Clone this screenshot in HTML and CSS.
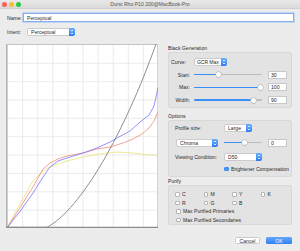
FILE: index.html
```html
<!DOCTYPE html>
<html>
<head>
<meta charset="utf-8">
<link rel="stylesheet" href="styles.css">
</head>
<body>
<div class="window">
  <div class="titlebar">
    <div class="lights"><span class="light red"></span><span class="light yellow"></span><span class="light green"></span></div>
    <div class="title">Durst Rho P10 200@MacBook-Pro</div>
    <div></div>
  </div>
  <div class="content">
    <div class="row name-row"><span class="lbl name-lbl">Name:</span><div class="textfield focus">Perceptual</div></div>
    <div class="row intent-row"><span class="lbl intent-lbl">Intent:</span>
      <div class="popup intent-pop"><span class="ptext">Perceptual</span><span class="stepper"><svg viewBox="0 0 6 8"><polyline points="1.8,3.2 3,2 4.2,3.2"/><polyline points="1.8,4.8 3,6 4.2,4.8"/></svg></span></div>
    </div>
    <div class="main">
      <svg class="graph" viewBox="0 0 152 184" width="152" height="184">
        <rect x="0" y="0" width="152" height="184" fill="#fff"/>
        <g stroke="#e6e6e6" stroke-width="0.8">
          <line x1="16.6" y1="0" x2="16.6" y2="184"/>
          <line x1="31.7" y1="0" x2="31.7" y2="184"/>
          <line x1="46.8" y1="0" x2="46.8" y2="184"/>
          <line x1="61.9" y1="0" x2="61.9" y2="184"/>
          <line x1="77" y1="0" x2="77" y2="184"/>
          <line x1="92.1" y1="0" x2="92.1" y2="184"/>
          <line x1="107.2" y1="0" x2="107.2" y2="184"/>
          <line x1="122.3" y1="0" x2="122.3" y2="184"/>
          <line x1="137.4" y1="0" x2="137.4" y2="184"/>
          <line x1="0" y1="19.3" x2="152" y2="19.3"/>
          <line x1="0" y1="37.7" x2="152" y2="37.7"/>
          <line x1="0" y1="56" x2="152" y2="56"/>
          <line x1="0" y1="74.3" x2="152" y2="74.3"/>
          <line x1="0" y1="92.7" x2="152" y2="92.7"/>
          <line x1="0" y1="111" x2="152" y2="111"/>
          <line x1="0" y1="129.4" x2="152" y2="129.4"/>
          <line x1="0" y1="147.8" x2="152" y2="147.8"/>
          <line x1="0" y1="166.2" x2="152" y2="166.2"/>
        </g>
        <rect x="0" y="0" width="1.6" height="184" fill="#b2b2b2"/>
        <line x1="0" y1="0.5" x2="152" y2="0.5" stroke="#c4c4c4" stroke-width="1"/>
        <line x1="151.5" y1="0" x2="151.5" y2="184" stroke="#d2d2d2" stroke-width="1"/>
        <g fill="none" stroke-width="0.75" stroke-linejoin="round" stroke-linecap="round">
          <polyline stroke="#e8df70" points="1,184 15,158 27,137 37,127 44,123 52,120 61,117 77,113 94,110 111,108 127,109 143,111 152,111"/>
          <polyline stroke="#f08474" points="1,184 15,162 27,143 37,125 44,119 52,115 61,112 77,109 91,105 104,103 117,99 127,95 136,90 143,84 148,77 152,68"/>
          <polyline stroke="#6f6cff" points="1,184 15,166 27,149 37,133 44,123 52,117 61,114 77,109 91,104 104,98 111,94 124,87 134,78 143,71 148,62 152,44"/>
          <path stroke="#6a6a6a" d="M1,183.3 L41,183.3 C75,165 118,90 150,0"/>
        </g>
        <line x1="0" y1="183.4" x2="152" y2="183.4" stroke="#8c8c8c" stroke-width="1.2"/>
      </svg>
      <div class="side">
        <div class="group-label first">Black Generation</div>
        <div class="box bg-box">
          <div class="crow"><span class="rlabel curve-lbl">Curve:</span><div class="popup curve-pop"><span class="ptext tight">GCR Max</span><span class="stepper"><svg viewBox="0 0 6 8"><polyline points="1.8,3.2 3,2 4.2,3.2"/><polyline points="1.8,4.8 3,6 4.2,4.8"/></svg></span></div></div>
          <div class="crow"><span class="rlabel">Start:</span><div class="slider bg-slider"><span class="fill" style="width:21.5px"></span><span class="thumb"></span><span class="rest"></span></div><div class="textfield num">30</div></div>
          <div class="crow"><span class="rlabel">Max:</span><div class="slider bg-slider"><span class="fill" style="width:63.5px"></span><span class="thumb"></span><span class="rest"></span></div><div class="textfield num">100</div></div>
          <div class="crow"><span class="rlabel">Width:</span><div class="slider bg-slider"><span class="fill" style="width:56.5px"></span><span class="thumb"></span><span class="rest"></span></div><div class="textfield num">90</div></div>
        </div>
        <div class="group-label">Options</div>
        <div class="box opt-box">
          <div class="orow r1"><span class="olabel">Profile size:</span><div class="popup size-pop"><span class="ptext">Large</span><span class="stepper"><svg viewBox="0 0 6 8"><polyline points="1.8,3.2 3,2 4.2,3.2"/><polyline points="1.8,4.8 3,6 4.2,4.8"/></svg></span></div></div>
          <div class="orow r2"><div class="popup chroma-pop"><span class="ptext">Chroma</span><span class="stepper"><svg viewBox="0 0 6 8"><polyline points="1.8,3.2 3,2 4.2,3.2"/><polyline points="1.8,4.8 3,6 4.2,4.8"/></svg></span></div><div class="slider chroma-slider"><span class="fill" style="width:17.5px"></span><span class="thumb"></span><span class="rest"></span></div><div class="textfield num">0</div></div>
          <div class="orow r3"><span class="olabel">Viewing Condition:</span><div class="popup view-pop"><span class="ptext">D50</span><span class="stepper"><svg viewBox="0 0 6 8"><polyline points="1.8,3.2 3,2 4.2,3.2"/><polyline points="1.8,4.8 3,6 4.2,4.8"/></svg></span></div></div>
          <div class="orow r4"><span class="check on"><svg viewBox="0 0 5 5"><polyline points="1.1,2.6 2.1,3.6 3.9,1.3"/></svg></span><span class="ctext">Brightener Compensation</span></div>
        </div>
        <div class="group-label purify-lbl">Purify</div>
        <div class="box pur-box">
          <div class="prow grid4">
            <span class="citem"><span class="check"></span><span class="ctext">C</span></span>
            <span class="citem"><span class="check"></span><span class="ctext">M</span></span>
            <span class="citem"><span class="check"></span><span class="ctext">Y</span></span>
            <span class="citem"><span class="check"></span><span class="ctext">K</span></span>
          </div>
          <div class="prow grid4">
            <span class="citem"><span class="check"></span><span class="ctext">R</span></span>
            <span class="citem"><span class="check"></span><span class="ctext">G</span></span>
            <span class="citem"><span class="check"></span><span class="ctext">B</span></span>
          </div>
          <div class="prow"><span class="citem"><span class="check"></span><span class="ctext">Max Purified Primaries</span></span></div>
          <div class="prow"><span class="citem"><span class="check"></span><span class="ctext">Max Purified Secondaries</span></span></div>
        </div>
      </div>
    </div>
    <div class="buttons">
      <div class="btn cancel">Cancel</div>
      <div class="btn ok">OK</div>
    </div>
  </div>
</div>
</body>
</html>
```

FILE: styles.css
```css
* { box-sizing: border-box; }
html, body { margin: 0; padding: 0; }
body {
  width: 300px;
  height: 251px;
  overflow: hidden;
  background: #ececec;
  font-family: "Liberation Sans", Arial, sans-serif;
  font-size: 5.1px;
  color: #2a2a2a;
}
.window { width: 300px; height: 251px; }
.titlebar {
  height: 9px;
  display: grid;
  grid-template-columns: 1fr auto 1fr;
  align-items: center;
  background: linear-gradient(#e9e9e9, #dadada);
  border-bottom: 1px solid #d0d0d0;
}
.lights { display: flex; gap: 2px; padding-left: 2px; }
.light { width: 5px; height: 5px; border-radius: 50%; display: block; }
.red { background: #fc5f57; }
.yellow { background: #fdbc2e; }
.green { background: #2ac73f; }
.title { color: #555; white-space: nowrap; }

.content { padding: 4px 6px 0 6px; }
.row { display: flex; align-items: center; }
.name-row { height: 9px; }
.name-lbl { width: 17px; padding-left: 1px; }
.intent-row { height: 8px; margin-top: 6px; }
.intent-lbl { width: 21px; padding-left: 1px; }

.textfield {
  background: #fff;
  border: 1px solid #c8c8c8;
  display: flex;
  align-items: center;
  padding-left: 2px;
  white-space: nowrap;
}
.textfield.focus {
  flex: 1;
  height: 9px;
  padding-left: 3px;
  border-color: #86aeea;
  box-shadow: 0 0 0 0.8px #b7cff2;
}
.num { width: 19px; height: 8px; flex: none; margin-left: 6px; }

.popup {
  display: flex;
  align-items: stretch;
  height: 8px;
  background: #fff;
  border: 1px solid #cbcbcb;
  border-radius: 2px;
  flex: none;
}
.ptext { flex: 1; display: flex; align-items: center; padding-left: 3px; white-space: nowrap; overflow: hidden; }
.ptext.tight { padding-left: 2px; letter-spacing: -0.1px; }
.stepper {
  width: 6px;
  flex: none;
  margin: -1px -1px -1px 0;
  background: linear-gradient(#6cb0fb, #2b7cf4);
  border-radius: 0 2px 2px 0;
  display: flex;
}
.stepper svg { width: 6px; height: 8px; fill: none; stroke: #fff; stroke-width: 0.8; }
.intent-pop { width: 48px; }

.main { display: flex; gap: 10px; margin-top: 8px; }
.graph { flex: none; display: block; }
.side { width: 124px; flex: none; }

.group-label { height: 8px; line-height: 8px; margin-top: 4px; }
.group-label.first { margin-top: 0; }
.purify-lbl { margin-top: 0; }
.box {
  background: #e3e3e3;
  border: 1px solid #d8d8d8;
  border-radius: 2px;
}
.bg-box { height: 56px; padding: 5px 4px 0 0; display: flex; flex-direction: column; gap: 4.7px; }
.crow { display: flex; align-items: center; height: 8px; }
.rlabel { width: 21px; text-align: right; flex: none; margin-right: 4px; }
.curve-lbl { text-align: left; padding-left: 2px; }
.curve-pop { width: 33px; margin-left: 0; }

.slider { display: flex; align-items: center; height: 8px; flex: none; }
.bg-slider { width: 68px; }
.chroma-slider { width: 38px; margin-left: 6px; }
.fill { height: 1.3px; background: #3a8ef5; border-radius: 1px; display: block; flex: none; }
.thumb {
  width: 5px; height: 5px; border-radius: 50%;
  background: #fff;
  box-shadow: 0 0 0 0.5px #b0b0b0, 0 0.5px 1px rgba(0,0,0,0.25);
  display: block; flex: none;
}
.rest { flex: 1; height: 1.3px; background: #bdbdbd; border-radius: 1px; display: block; }

.opt-box { height: 57px; padding: 3.3px 4px 0 6px; display: flex; flex-direction: column; }
.orow { display: flex; align-items: center; height: 8px; }
.r2 { margin-top: 6.4px; }
.r3 { margin-top: 6.6px; }
.r4 { margin-top: 3.7px; padding-left: 49px; }
.olabel { width: 49px; flex: none; white-space: nowrap; }
.size-pop { width: 28px; }
.chroma-pop { width: 42px; margin-left: 1px; }
.view-pop { width: 38px; }

.check {
  width: 4.5px; height: 4.5px;
  background: #fff;
  border: 0.8px solid #b5b5b5;
  border-radius: 1px;
  display: flex; flex: none;
}
.check.on { background: #3a8ef5; border-color: #3a8ef5; }
.check svg { width: 100%; height: 100%; fill: none; stroke: #fff; stroke-width: 0.8; }
.ctext { margin-left: 2.5px; white-space: nowrap; color: #2a2a2a; }
.citem { display: flex; align-items: center; }

.pur-box { height: 40px; padding: 4px 4px 0 6px; display: flex; flex-direction: column; }
.prow { display: flex; align-items: center; height: 8.7px; }
.grid4 { display: grid; grid-template-columns: repeat(4, 28.5px); }
.prow:nth-child(3), .prow:nth-child(4) { padding-left: 1px; }

.buttons { display: flex; justify-content: flex-end; gap: 6px; margin-top: 9px; padding-right: 2px; }
.btn {
  height: 7px;
  border-radius: 1.5px;
  display: flex; align-items: center; justify-content: center;
}
.cancel { width: 25px; background: #fff; border: 1px solid #cacaca; }
.ok { width: 26px; background: linear-gradient(#62a8fa, #2f80f4); color: #fff; }
```
